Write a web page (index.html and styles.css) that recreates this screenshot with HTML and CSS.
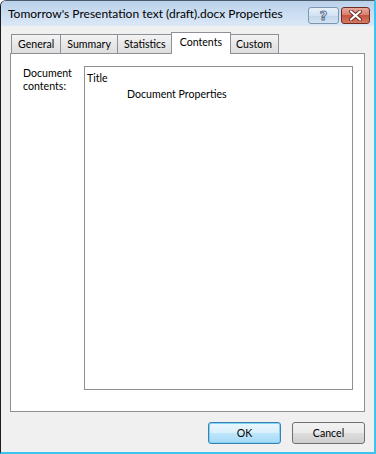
FILE: index.html
```html
<!DOCTYPE html>
<html lang="en">
<head>
    <meta charset="UTF-8">
    <title>Tomorrow's Presentation text (draft).docx Properties</title>
    <link rel="stylesheet" href="styles.css">
</head>
<body>
    <div class="window">
        <div class="titlebar">
            <span class="title">Tomorrow's Presentation text (draft).docx Properties</span>
            <div class="caption-buttons">
                <button class="cap-btn help">?</button>
                <button class="cap-btn close">
                    <svg width="13" height="11" viewBox="0 0 13 11">
                        <path d="M2 1.5 L11 9.5 M11 1.5 L2 9.5" stroke="#6b2a22" stroke-width="4" stroke-linecap="round"/>
                        <path d="M2 1.5 L11 9.5 M11 1.5 L2 9.5" stroke="#fff" stroke-width="2.2" stroke-linecap="round"/>
                    </svg>
                </button>
            </div>
        </div>
        <div class="client">
            <div class="tabs">
                <div class="tab">General</div>
                <div class="tab">Summary</div>
                <div class="tab">Statistics</div>
                <div class="tab active">Contents</div>
                <div class="tab">Custom</div>
            </div>
            <div class="panel">
                <div class="label">Document<br>contents:</div>
                <div class="contents">
                    <div class="item">Title</div>
                    <div class="item sub">Document Properties</div>
                </div>
            </div>
            <div class="footer">
                <button class="btn default">OK</button>
                <button class="btn">Cancel</button>
            </div>
        </div>
    </div>
</body>
</html>
```

FILE: styles.css
```css
body {
    margin: 0;
    font-family: Lato, "Noto Sans", sans-serif;
    font-size: 10.6px;
    color: #000;
    background: #fff;
}

.window {
    width: 376px;
    height: 454px;
    box-sizing: border-box;
    border-left: 1px solid #1c1c1c;
    border-top: 1px solid #4a5a6a;
    border-right: 2px solid #3cc4ee;
    border-bottom: 2px solid #3cc4ee;
    border-top-left-radius: 6px;
    background: #f0f0f0;
    display: flex;
    flex-direction: column;
    overflow: hidden;
}

.titlebar {
    height: 25px;
    display: flex;
    align-items: center;
    justify-content: space-between;
    padding: 0 4px 0 7px;
    background: linear-gradient(#b9d1ea, #cfe0f3 60%, #dbe8f6);
    flex-shrink: 0;
}

.title {
    font-size: 12px;
    color: #000;
    white-space: nowrap;
}

.caption-buttons {
    display: flex;
    gap: 2px;
    margin-top: 3px;
}

.cap-btn {
    height: 17px;
    border-radius: 3px;
    padding: 0;
    display: flex;
    align-items: center;
    justify-content: center;
    font-family: "DejaVu Sans", sans-serif;
}

.help {
    width: 31px;
    border: 1px solid #7d97b3;
    background: linear-gradient(#e8f0f9, #d3e2f2 50%, #c1d5ea 51%, #d2e2f3);
    color: #fff;
    font-size: 13px;
    font-weight: bold;
    -webkit-text-stroke: 1px #55718f;
}

.close {
    width: 29px;
    border: 1px solid #6e2b22;
    background: linear-gradient(#e9a99c, #d8806f 45%, #c7553f 50%, #d47a62);
}

.client {
    flex: 1;
    display: flex;
    flex-direction: column;
    padding: 0 9px;
}

.tabs {
    display: flex;
    align-items: flex-end;
    height: 27px;
    padding-left: 1px;
    position: relative;
    z-index: 1;
    flex-shrink: 0;
}

.tab {
    height: 19px;
    line-height: 18px;
    padding: 0 6px;
    box-sizing: border-box;
    border: 1px solid #8d9097;
    border-bottom: none;
    margin-right: -1px;
    background: linear-gradient(#f4f4f4, #e8e8e8 50%, #dddddd);
}

.tab.active {
    height: 22px;
    line-height: 19px;
    padding: 0 8px;
    background: #fff;
    margin-bottom: -1px;
    margin-left: -1px;
    margin-right: -2px;
    position: relative;
    z-index: 2;
}

.panel {
    height: 359px;
    box-sizing: border-box;
    border: 1px solid #8d9097;
    background: #fff;
    display: flex;
    padding: 12px 0 0 12px;
    flex-shrink: 0;
}

.label {
    width: 61px;
    flex-shrink: 0;
    line-height: 13px;
    padding-top: 1px;
}

.contents {
    width: 269px;
    height: 324px;
    border: 1px solid #8d9097;
    padding: 4px 2px;
    box-sizing: border-box;
}

.item {
    line-height: 15px;
}

.item.sub {
    padding-left: 40px;
    line-height: 17px;
}

.footer {
    display: flex;
    justify-content: flex-end;
    gap: 11px;
    padding-top: 10px;
}

.btn {
    width: 73px;
    height: 22px;
    font-family: Lato, "Noto Sans", sans-serif;
    font-size: 10.6px;
    color: #000;
    border: 1px solid #707070;
    border-radius: 3px;
    background: linear-gradient(#f2f2f2, #ebebeb 50%, #dddddd 51%, #cfcfcf);
    padding: 0;
}

.btn.default {
    border-color: #3c7fb1;
    box-shadow: inset 0 0 0 1px #7ed4f4;
    background: linear-gradient(#eaf6fd, #d9f0fc 50%, #bee6fd 51%, #a7d9f5);
}
```
